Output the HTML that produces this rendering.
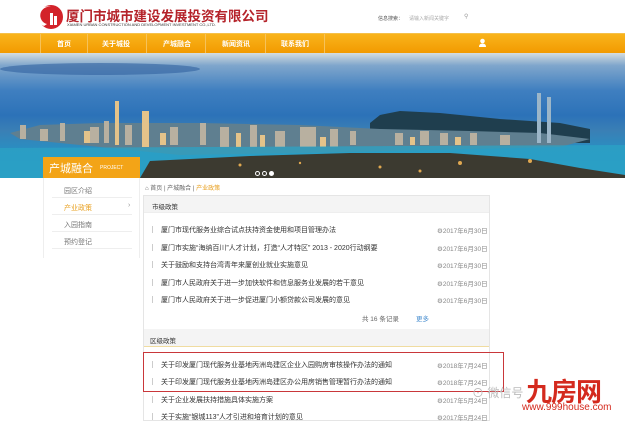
<!DOCTYPE html>
<html><head><meta charset="utf-8"><style>
*{margin:0;padding:0;box-sizing:border-box}
body{width:625px;height:421px;overflow:hidden;background:#fff;font-family:"Liberation Sans","Noto Sans CJK SC",sans-serif;position:relative;color:#333}
.a{position:absolute;white-space:nowrap}
.nav{position:absolute;left:0;top:33px;width:625px;height:20px;background:linear-gradient(#f9b41c,#f29a00);border-top:1px solid #f5c04a}
.nav span{position:absolute;top:5px;color:#fff;font-size:7px;font-weight:bold}
.nav i{position:absolute;top:0;width:1px;height:20px;background:#f6c25a}
.banner{position:absolute;left:0;top:53px;width:625px;height:125px;background:linear-gradient(#d5dde0 0%,#7fa6cc 10%,#3f7fc0 30%,#2c72b8 50%,#3a7fb5 62%,#2c8cc0 75%,#2a98c4 100%);overflow:hidden}
.li{font-size:7px;color:#333}
.dt{font-size:6.5px;color:#888}
.bar{position:absolute;width:1px;height:7px;background:#ccc}
</style></head><body>
<svg class="a" style="left:38px;top:4px" width="26" height="26" viewBox="0 0 26 26"><circle cx="13" cy="13" r="12" fill="#d3232a"/><path d="M6 22 A10 10 0 0 1 13 3 A8 8 0 0 0 9 20Z" fill="#fff"/><rect x="12" y="9" width="3" height="12" fill="#fff"/><rect x="16" y="12" width="3" height="9" fill="#fff"/></svg>
<div class="a" style="left:66px;top:5px;font-size:13.5px;font-weight:bold;color:#b5232a">厦门市城市建设发展投资有限公司</div>
<div class="a" style="left:67px;top:22px;font-size:4px;color:#333">XIAMEN URBAN CONSTRUCTION AND DEVELOPMENT INVESTMENT CO.,LTD.</div>
<div class="a" style="left:378px;top:15px;font-size:5px;color:#555">信息搜索：</div>
<div class="a" style="left:409px;top:15px;font-size:5px;color:#aaa">请输入新闻关键字</div>
<div class="a" style="left:464px;top:13px;font-size:6px;color:#999">⚲</div>
<div class="nav">
<i style="left:40px"></i><span style="left:57px">首页</span><i style="left:87px"></i><span style="left:102px">关于城投</span><i style="left:146px"></i><span style="left:163px">产城融合</span><i style="left:205px"></i><span style="left:222px">新闻资讯</span><i style="left:265px"></i><span style="left:281px">联系我们</span><i style="left:324px"></i>
<svg class="a" style="left:478px;top:4px" width="9" height="10" viewBox="0 0 9 10"><circle cx="4.5" cy="3" r="2.3" fill="#fff"/><path d="M1 9 Q1 5.5 4.5 5.5 Q8 5.5 8 9Z" fill="#fff"/></svg>
</div>
<div class="banner">
<div class="a" style="left:0;top:10px;width:200px;height:12px;background:#2a5b9a;opacity:.55;border-radius:50%"></div>
<svg class="a" style="left:0;top:0" width="625" height="125" viewBox="0 0 625 125">
<path d="M370 70 L380 62 L400 58 L440 60 L500 66 L560 70 L590 76 L590 90 L370 90Z" fill="#1f3e4e"/>
<path d="M10 80 L40 72 L100 70 L200 70 L300 72 L380 76 L470 78 L540 80 L590 86 L560 94 L470 96 L300 100 L180 102 L80 92 L20 86Z" fill="#5f7f90"/>
<g fill="#b8b0a0"><rect x="20" y="72" width="6" height="14"/><rect x="40" y="76" width="8" height="12"/><rect x="60" y="70" width="5" height="18"/><rect x="90" y="74" width="9" height="16"/><rect x="104" y="68" width="5" height="22"/><rect x="125" y="72" width="7" height="20"/><rect x="170" y="74" width="8" height="18"/><rect x="200" y="70" width="6" height="22"/><rect x="220" y="74" width="9" height="20"/><rect x="250" y="72" width="7" height="22"/><rect x="275" y="78" width="10" height="16"/><rect x="300" y="74" width="16" height="20"/><rect x="330" y="76" width="8" height="18"/><rect x="350" y="78" width="6" height="14"/><rect x="395" y="80" width="8" height="12"/><rect x="420" y="78" width="9" height="14"/><rect x="440" y="80" width="8" height="12"/><rect x="470" y="80" width="7" height="12"/><rect x="500" y="82" width="10" height="10"/></g>
<g fill="#e4c38a"><rect x="115" y="48" width="4" height="44"/><rect x="142" y="58" width="7" height="36"/><rect x="84" y="78" width="6" height="12"/><rect x="160" y="80" width="6" height="12"/><rect x="236" y="80" width="5" height="14"/><rect x="260" y="82" width="5" height="12"/><rect x="320" y="84" width="6" height="10"/><rect x="410" y="84" width="5" height="8"/><rect x="455" y="84" width="6" height="8"/></g>
<rect x="537" y="40" width="4" height="50" fill="#9cb6c8"/><rect x="547" y="44" width="4" height="46" fill="#9cb6c8"/>
<path d="M0 95 L625 92 L625 125 L0 125Z" fill="#2ba3c6" opacity=".75"/>
<path d="M140 125 L150 108 L250 103 L350 100 L450 100 L530 106 L580 115 L625 122 L625 125Z" fill="#3c3a30"/>
<g fill="#e0a850"><circle cx="460" cy="110" r="2"/><circle cx="380" cy="114" r="1.5"/><circle cx="530" cy="108" r="2"/><circle cx="240" cy="112" r="1.5"/><circle cx="300" cy="110" r="1.2"/><circle cx="420" cy="118" r="1.5"/></g>
</svg>
<div class="a" style="left:255px;top:118px;width:5px;height:5px;border:1px solid #fff;border-radius:50%"></div>
<div class="a" style="left:262px;top:118px;width:5px;height:5px;border:1px solid #fff;border-radius:50%"></div>
<div class="a" style="left:269px;top:118px;width:5px;height:5px;background:#fff;border-radius:50%"></div>
</div>
<div class="a" style="left:43px;top:157px;width:97px;height:21px;background:#f3a417"><span class="a" style="left:6px;top:3px;font-size:11px;color:#fff">产城融合</span><span class="a" style="left:57px;top:8px;font-size:5px;color:#fff">PROJECT</span></div>
<div class="a" style="left:43px;top:178px;width:97px;height:80px;background:#fff;border-left:1px solid #eee;border-right:1px solid #eee"></div>
<div class="a li" style="left:64px;top:186px;color:#777">园区介绍</div>
<div class="a" style="left:52px;top:197px;width:80px;height:1px;background:#eee"></div>
<div class="a li" style="left:64px;top:203px;color:#e8a020">产业政策</div><div class="a" style="left:128px;top:202px;font-size:7px;color:#999">›</div>
<div class="a" style="left:52px;top:214px;width:80px;height:1px;background:#eee"></div>
<div class="a li" style="left:64px;top:220px;color:#777">入园指南</div>
<div class="a" style="left:52px;top:231px;width:80px;height:1px;background:#eee"></div>
<div class="a li" style="left:64px;top:237px;color:#777">预约登记</div>
<div class="a" style="left:52px;top:248px;width:80px;height:1px;background:#eee"></div>
<div class="a" style="left:145px;top:183px;font-size:6px;color:#666">⌂ 首页 | 产城融合 | <span style="color:#e8a020">产业政策</span></div>
<div class="a" style="left:143px;top:195px;width:347px;height:226px;border:1px solid #e5e5e5"></div>
<div class="a" style="left:144px;top:196px;width:345px;height:17px;background:#f4f4f4;border-bottom:1px solid #eee"></div>
<div class="a li" style="left:152px;top:201px;font-size:6.5px">市级政策</div>
<div class="bar" style="left:152px;top:226px"></div><div class="a li" style="left:161px;top:225px">厦门市现代服务业综合试点扶持资金使用和项目管理办法</div><div class="a dt" style="left:437px;top:225px">⚙2017年6月30日</div>
<div class="bar" style="left:152px;top:244px"></div><div class="a li" style="left:161px;top:243px">厦门市实施“海纳百川”人才计划，打造“人才特区” 2013 - 2020行动纲要</div><div class="a dt" style="left:437px;top:243px">⚙2017年6月30日</div>
<div class="bar" style="left:152px;top:261px"></div><div class="a li" style="left:161px;top:260px">关于鼓励和支持台湾青年来厦创业就业实施意见</div><div class="a dt" style="left:437px;top:260px">⚙2017年6月30日</div>
<div class="bar" style="left:152px;top:279px"></div><div class="a li" style="left:161px;top:278px">厦门市人民政府关于进一步加快软件和信息服务业发展的若干意见</div><div class="a dt" style="left:437px;top:278px">⚙2017年6月30日</div>
<div class="bar" style="left:152px;top:296px"></div><div class="a li" style="left:161px;top:295px">厦门市人民政府关于进一步促进厦门小额贷款公司发展的意见</div><div class="a dt" style="left:437px;top:295px">⚙2017年6月30日</div>
<div class="a" style="left:362px;top:313px;font-size:6.5px;color:#666">共 16 条记录</div><div class="a" style="left:416px;top:313px;font-size:6.5px;color:#4a8fd0">更多</div>
<div class="a" style="left:144px;top:329px;width:345px;height:18px;background:#f4f4f4;border-bottom:1px solid #f0dca0"></div>
<div class="a li" style="left:150px;top:335px;font-size:6.5px">区级政策</div>
<div class="a" style="left:143px;top:352px;width:361px;height:40px;border:1.5px solid #c9373a"></div>
<div class="bar" style="left:152px;top:361px"></div><div class="a li" style="left:161px;top:360px">关于印发厦门现代服务业基地丙洲岛建区企业入园购房审核操作办法的通知</div><div class="a dt" style="left:437px;top:360px">⚙2018年7月24日</div>
<div class="bar" style="left:152px;top:378px"></div><div class="a li" style="left:161px;top:377px">关于印发厦门现代服务业基地丙洲岛建区办公用房销售管理暂行办法的通知</div><div class="a dt" style="left:437px;top:377px">⚙2018年7月24日</div>
<div class="bar" style="left:152px;top:396px"></div><div class="a li" style="left:161px;top:395px">关于企业发展扶持措施具体实施方案</div><div class="a dt" style="left:437px;top:395px">⚙2017年5月24日</div>
<div class="bar" style="left:152px;top:413px"></div><div class="a li" style="left:161px;top:412px">关于实施“银城113”人才引进和培育计划的意见</div><div class="a dt" style="left:437px;top:412px">⚙2017年5月24日</div>
<div class="a" style="left:472px;top:384px;font-size:12px;color:#bbb">⊙ 微信号</div>
<div class="a" style="left:526px;top:372px;font-size:26px;font-weight:bold;color:#d42a1e;letter-spacing:-1px">九房网</div>
<div class="a" style="left:522px;top:402px;font-size:10px;color:#d42a1e">www.999house.com</div>
</body></html>
